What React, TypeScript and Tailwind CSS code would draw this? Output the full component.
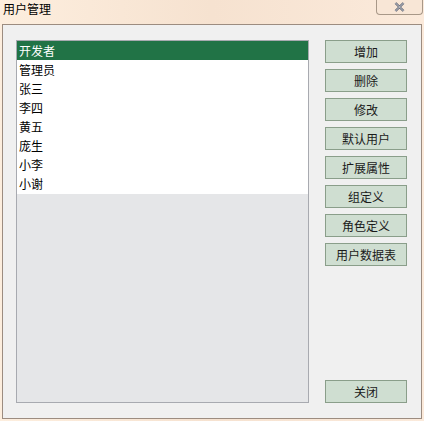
import React from 'react';

const users = ['开发者', '管理员', '张三', '李四', '黄五', '庞生', '小李', '小谢'];
const actions = ['增加', '删除', '修改', '默认用户', '扩展属性', '组定义', '角色定义', '用户数据表'];

const font = { fontFamily: '"Noto Sans CJK SC", "Liberation Sans", sans-serif' };

function Btn({ label }: { label: string }) {
  return (
    <button className="h-[23px] w-[82px] border border-[#8a9e8a] bg-[#cfded1] text-[12px] leading-none text-[#1a1a1a]">
      {label}
    </button>
  );
}

export default function App() {
  return (
    <div
      className="w-[424px] h-[421px] bg-gradient-to-r from-[#fdeede] via-[#f6e2d0] to-[#fbeadb] pt-0 px-[2px] pb-[2px] flex flex-col"
      style={font}
    >
      {/* title bar */}
      <div className="h-[24px] flex items-start justify-between">
        <div className="pl-[1px] pt-[1px] text-[12px] text-black leading-[16px]">用户管理</div>
        <div className="mr-[-1px] w-[47px] h-[15px] border border-t-0 border-[#a89888] rounded-b-[4px] bg-[#f8e6d6] flex items-center justify-center">
          <svg width="11" height="10" viewBox="0 0 11 10">
            <path d="M1.5 1 L9.5 9 M9.5 1 L1.5 9" stroke="#5a6070" strokeWidth="2.4" />
            <path d="M1.5 1 L9.5 9 M9.5 1 L1.5 9" stroke="#e8e8ec" strokeWidth="0.8" />
          </svg>
        </div>
      </div>

      {/* body */}
      <div className="flex-1 border border-[#9c8c80] bg-[#f0f0f0] flex pl-[13px] pt-[15px] pb-[15px]">
        <div className="w-[293px] border border-[#a8aab0] bg-[#e5e6e8] flex flex-col">
          <div className="bg-white pb-[1px]">
            {users.map((u, i) => (
              <div
                key={u}
                className={
                  'h-[19px] pl-[2px] text-[12px] leading-[19px] ' +
                  (i === 0 ? 'bg-[#217346] text-white' : 'text-black')
                }
              >
                {u}
              </div>
            ))}
          </div>
        </div>
        <div className="ml-[16px] flex flex-col justify-between">
          <div className="flex flex-col gap-[6px]">
            {actions.map((a) => (
              <Btn key={a} label={a} />
            ))}
          </div>
          <Btn label="关闭" />
        </div>
      </div>
    </div>
  );
}
